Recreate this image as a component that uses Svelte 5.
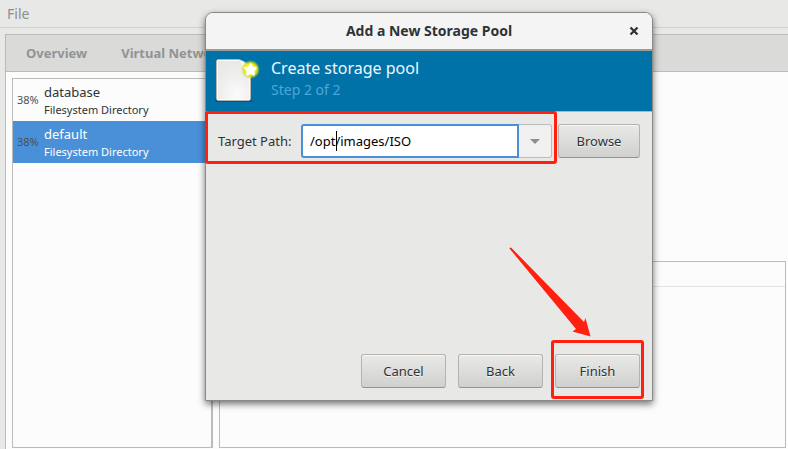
<script>
  const tabs = ['Overview', 'Virtual Networks'];
  const pools = [
    { name: 'database', type: 'Filesystem Directory', used: '38%' },
    { name: 'default', type: 'Filesystem Directory', used: '38%' }
  ];
  let selected = $state('default');
  let path = $state('/opt/images/ISO');
</script>

<div class="app">
  <nav class="menubar"><button>File</button></nav>

  <main class="notebook">
    <div class="tabs">
      {#each tabs as tab}
        <button>{tab}</button>
      {/each}
    </div>
    <div class="page">
      <div class="pools">
        {#each pools as pool}
          <button class="pool" class:selected={pool.name === selected} onclick={() => (selected = pool.name)}>
            <span class="used">{pool.used}</span>
            <span class="info">
              <span class="name">{pool.name}</span>
              <span class="type">{pool.type}</span>
            </span>
          </button>
        {/each}
      </div>
      <div class="details">
        <div class="volumes"><div class="columns"></div></div>
      </div>
    </div>
  </main>

  <div class="dialog" role="dialog" aria-labelledby="dialog-title">
    <header class="titlebar">
      <h1 id="dialog-title">Add a New Storage Pool</h1>
      <button class="close" aria-label="Close">
        <svg width="10" height="10" viewBox="0 0 10 10"><path d="M1.5 1.5 8.5 8.5M8.5 1.5 1.5 8.5" stroke="#2e3436" stroke-width="2.3" /></svg>
      </button>
    </header>

    <div class="banner">
      <svg width="48" height="48" viewBox="0 0 48 48" aria-hidden="true">
        <defs>
          <radialGradient id="paper" cx="0.6" cy="0.85" r="0.9">
            <stop offset="0" stop-color="#fbfbfb" />
            <stop offset="0.5" stop-color="#efefee" />
            <stop offset="1" stop-color="#e8e8e6" />
          </radialGradient>
          <radialGradient id="glow">
            <stop offset="0" stop-color="#fff94a" />
            <stop offset="0.6" stop-color="#eaf00c" />
            <stop offset="0.8" stop-color="#d3de16" stop-opacity="0.65" />
            <stop offset="1" stop-color="#b9d020" stop-opacity="0" />
          </radialGradient>
        </defs>
        <rect x="3" y="44" width="37" height="3" rx="1.5" fill="#003a5c" opacity="0.5" />
        <path d="M6.500 4.500H27Q30 5 32 8Q38 9 38.500 15V43.500Q38.500 45.500 36.500 45.500H6.500Q4.500 45.500 4.500 43.500V6.500Q4.500 4.500 6.500 4.500Z" fill="url(#paper)" stroke="#b4b4b0" />
        <path d="M5.500 44.500V5.500H27M37.500 22V44.500H5.500" fill="none" stroke="#fff" opacity="0.8" />
        <path d="M26 5Q31 7 30 13Q36 12 38 17V12L32 6Z" fill="#fff" opacity="0.7" />
        <circle cx="38.500" cy="14.500" r="9.500" fill="url(#glow)" />
        <path d="M38.500 9 40.200 12.500 44 13 41.300 15.800 42 19.700 38.500 17.900 35 19.700 35.700 15.800 33 13 36.800 12.500Z" fill="#fff" stroke="#fff" stroke-width="1.800" stroke-linejoin="round" />
      </svg>
      <div class="heading">
        <h2>Create storage pool</h2>
        <p>Step 2 of 2</p>
      </div>
    </div>

    <div class="form">
      <label for="target">Target Path:</label>
      <div class="combo">
        <div class="entry">
          <input id="target" type="text" bind:value={path} spellcheck="false" />
          <span class="caret"></span>
        </div>
        <button class="drop" aria-label="Show recent paths">
          <svg width="10" height="5" viewBox="0 0 10 5"><path d="M0 0H10L5 5Z" fill="#8b8e8f" /></svg>
        </button>
      </div>
      <button class="btn browse">Browse</button>
      <div class="mark path-mark"></div>
    </div>

    <footer>
      <button class="btn">Cancel</button>
      <button class="btn">Back</button>
      <div class="finish">
        <button class="btn">Finish</button>
        <div class="mark finish-mark"></div>
        <svg class="arrow" width="82" height="90" viewBox="0 0 82 90" aria-hidden="true">
          <path d="M.5 1.500Q1 0 2.500 1L75 75 76.500 71 81.500 89.500 63.500 84.500 67 82Z" fill="#ff2010" />
        </svg>
      </div>
    </footer>
  </div>
</div>

<style>
  :global(body) {
    background: #e8e8e6;
  }
  .app {
    position: relative;
    display: flex;
    flex-direction: column;
    height: 100vh;
    min-height: 420px;
    overflow: hidden;
    font: 13px/18px "Noto Sans", "Open Sans", sans-serif;
    color: #2e3436;
  }
  .app * {
    box-sizing: border-box;
  }
  button {
    padding: 0;
    border: 0;
    background: none;
    font: inherit;
    color: inherit;
  }
  h1, h2, p {
    margin: 0;
  }
  .menubar {
    display: flex;
    flex: none;
    height: 28px;
    padding-left: 7px;
    border-bottom: 1px solid #d0d0ce;
    font-size: 14px;
    color: #8b8e8f;
  }
  .notebook {
    display: flex;
    flex: 1;
    flex-direction: column;
    margin: 6px 0 0 5px;
    border: solid #bbbbb9;
    border-width: 1px 0 0 1px;
    background: #fcfcfc;
  }
  .tabs {
    display: flex;
    flex: none;
    gap: 34px;
    height: 37px;
    padding-left: 20px;
    border-bottom: 1px solid #bbbbb9;
    background: #dadad8;
    color: #919494;
  }
  .tabs button {
    font-size: 13px;
    font-weight: 700;
  }
  .page {
    display: flex;
    flex: 1;
    gap: 6px;
    padding: 6px 2px 1px 6px;
  }
  .pools {
    width: 201px;
    border: 1px solid #bbbbb9;
    border-right-width: 2px;
  }
  .pool {
    display: flex;
    align-items: center;
    gap: 4px;
    width: 100%;
    height: 42px;
    padding-left: 4px;
    text-align: left;
  }
  .selected {
    background: #4a90d9;
    color: #fff;
  }
  .used {
    width: 23px;
    font-size: 11px;
    color: #4c5052;
  }
  .info {
    display: flex;
    flex-direction: column;
    padding-top: 2px;
  }
  .type {
    font-size: 11px;
  }
  .details {
    display: flex;
    flex: 1;
    flex-direction: column;
    justify-content: flex-end;
  }
  .volumes {
    height: 187px;
    border: 1px solid #bbbbb9;
  }
  .columns {
    height: 25px;
    border-bottom: 1px solid #e3e3e2;
  }
  .dialog {
    position: absolute;
    top: 12px;
    left: 205px;
    display: flex;
    flex-direction: column;
    width: 448px;
    height: 389px;
    border: 1px solid #888a86;
    border-radius: 8px 8px 0 0;
    background: #e8e8e6;
    box-shadow: 0 3px 7px rgba(0, 0, 0, 0.55);
  }
  .titlebar {
    position: relative;
    display: flex;
    flex: none;
    align-items: center;
    justify-content: center;
    height: 38px;
    border-bottom: 2px solid #9d9d97;
    border-radius: 7px 7px 0 0;
    background: #f4f4f4;
  }
  h1 {
    font-size: 14px;
    line-height: 18px;
  }
  .close {
    position: absolute;
    right: 13px;
    display: flex;
  }
  .banner {
    display: flex;
    flex: none;
    gap: 11px;
    height: 61px;
    padding: 4px 6px;
    border-bottom: 1px solid #b5b5ae;
    background: #0072a8;
  }
  h2 {
    font-size: 16px;
    line-height: 26px;
    font-weight: 400;
    color: #f0f7fb;
  }
  .heading p {
    font-size: 14px;
    line-height: 18px;
    color: #4da6d8;
  }
  .form {
    position: relative;
    display: flex;
    align-items: center;
    gap: 6px;
    padding: 12px 12px 0;
  }
  label {
    width: 77px;
    white-space: nowrap;
  }
  .combo {
    display: flex;
    flex: 1;
    height: 34px;
  }
  .entry {
    position: relative;
    display: flex;
    flex: 1;
  }
  input {
    width: 100%;
    min-width: 0;
    padding: 0 7px;
    border: 2px solid #4a90d9;
    border-radius: 3px 0 0 3px;
    outline: none;
    background: #fff;
    font: inherit;
    color: #000;
  }
  .caret {
    position: absolute;
    top: 7px;
    left: 35px;
    width: 1px;
    height: 20px;
    background: #000;
  }
  .drop {
    display: flex;
    align-items: center;
    justify-content: center;
    width: 33px;
    border: 1px solid #bbbbb9;
    border-left: 0;
    border-radius: 0 3px 3px 0;
    background: #f0f0f0;
  }
  .btn {
    width: 85px;
    height: 34px;
    border: 1px solid #b3b3b0;
    border-bottom-color: #92928f;
    border-radius: 3px;
    background: linear-gradient(#e9e9e8, #d0d0ce);
    box-shadow: inset 0 1px #f8f8f8;
    text-shadow: 0 1px #f4f4f4;
  }
  .browse {
    width: 82px;
  }
  footer {
    display: flex;
    justify-content: flex-end;
    gap: 12px;
    margin-top: auto;
    padding: 0 12px 12px;
  }
  .finish {
    position: relative;
  }
  .mark {
    position: absolute;
    border: 3px solid #ff2010;
    border-radius: 3px;
    pointer-events: none;
  }
  .path-mark {
    top: -1px;
    right: 95px;
    left: -1px;
    height: 53px;
  }
  .finish-mark {
    top: -14px;
    right: -4px;
    bottom: -11px;
    left: -4px;
  }
  .arrow {
    position: absolute;
    top: -107px;
    right: 49px;
    pointer-events: none;
  }
</style>
